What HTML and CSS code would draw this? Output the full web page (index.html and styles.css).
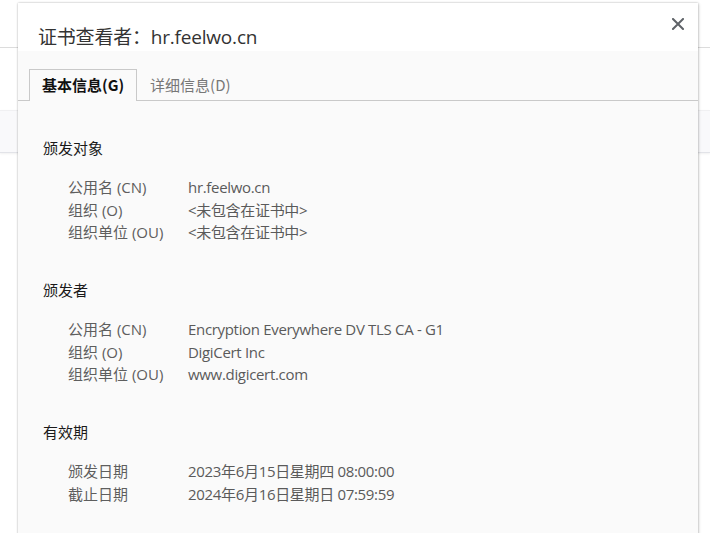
FILE: index.html
```html
<!DOCTYPE html>
<html lang="zh">
<head>
<meta charset="utf-8">
<title>证书查看者</title>
<link rel="stylesheet" href="styles.css">
</head>
<body>
<div class="page">
  <div class="bg-top"></div>
  <div class="bg-gap"></div>
  <div class="bg-band"></div>
</div>
<div class="dialog">
  <div class="dialog-head">
    <h1 class="title">证书查看者：hr.feelwo.cn</h1>
    <button class="close" aria-label="关闭">
      <svg width="12" height="12" viewBox="0 0 12 12"><path d="M1 1L11 11M11 1L1 11" stroke="#5f6368" stroke-width="2" stroke-linecap="square" fill="none"/></svg>
    </button>
  </div>
  <div class="dialog-body">
    <div class="tabs">
      <div class="tab active">基本信息(G)</div>
      <div class="tab">详细信息(D)</div>
    </div>
    <div class="content">
      <section class="section">
        <h2 class="sec-title">颁发对象</h2>
        <div class="rows">
          <div class="row"><span class="label">公用名 (CN)</span><span class="value">hr.feelwo.cn</span></div>
          <div class="row"><span class="label">组织 (O)</span><span class="value">&lt;未包含在证书中&gt;</span></div>
          <div class="row"><span class="label">组织单位 (OU)</span><span class="value">&lt;未包含在证书中&gt;</span></div>
        </div>
      </section>
      <section class="section">
        <h2 class="sec-title">颁发者</h2>
        <div class="rows">
          <div class="row"><span class="label">公用名 (CN)</span><span class="value">Encryption Everywhere DV TLS CA - G1</span></div>
          <div class="row"><span class="label">组织 (O)</span><span class="value">DigiCert Inc</span></div>
          <div class="row"><span class="label">组织单位 (OU)</span><span class="value">www.digicert.com</span></div>
        </div>
      </section>
      <section class="section">
        <h2 class="sec-title">有效期</h2>
        <div class="rows">
          <div class="row"><span class="label">颁发日期</span><span class="value">2023年6月15日星期四 08:00:00</span></div>
          <div class="row"><span class="label">截止日期</span><span class="value">2024年6月16日星期日 07:59:59</span></div>
        </div>
      </section>
    </div>
  </div>
</div>
</body>
</html>
```
FILE: styles.css
```css
html, body {
  margin: 0;
  padding: 0;
  background: #ffffff;
  overflow: hidden;
  height: 100%;
}
body {
  font-family: "Open Sans", "Noto Sans CJK SC", sans-serif;
  position: relative;
}
.page {
  display: flex;
  flex-direction: column;
}
.bg-top {
  height: 47px;
  border-bottom: 1px solid #dcdcdc;
}
.bg-gap {
  height: 62px;
}
.bg-band {
  height: 41px;
  background: #f9f9fb;
  border-top: 1px solid #f0f0f2;
  border-bottom: 1px solid #e2e3e8;
  box-shadow: 0 1px 2px rgba(0,0,0,0.06);
}
.dialog {
  position: absolute;
  left: 18px;
  top: 3px;
  width: 680px;
  bottom: -20px;
  background: #fafafa;
  box-shadow: 0 0 2px rgba(0,0,0,0.28), 1px 1px 3px rgba(0,0,0,0.12);
  display: flex;
  flex-direction: column;
}
.dialog-head {
  height: 48px;
  background: #ffffff;
  display: flex;
  align-items: flex-start;
  justify-content: space-between;
}
.title {
  margin: 20px 0 0 20px;
  font-family: "Open Sans", "Noto Sans CJK SC", sans-serif;
  font-weight: normal;
  font-size: 19px;
  line-height: 28px;
  color: #333333;
  letter-spacing: -0.2px;
}
.close {
  margin: 13px 12px 0 0;
  width: 16px;
  height: 16px;
  padding: 2px;
  border: 0;
  background: transparent;
  display: flex;
  align-items: center;
  justify-content: center;
}
.dialog-body {
  flex: 1;
}
.tabs {
  margin-top: 18px;
  padding-left: 11px;
  display: flex;
  border-bottom: 1px solid #c9c9c9;
  height: 31px;
}
.tab {
  font-family: "Noto Sans CJK SC", sans-serif;
  font-size: 15px;
  line-height: 30px;
  color: #777777;
  padding: 0 12px;
  border: 1px solid transparent;
  border-bottom: 0;
}
.tab.active {
  font-weight: bold;
  color: #111111;
  border-color: #c9c9c9;
  background: #fafafa;
  height: 31px;
  margin-bottom: -1px;
}
.content {
  padding: 36px 0 0 25px;
  display: flex;
  flex-direction: column;
  gap: 35.5px;
}
.sec-title {
  margin: 0;
  font-family: "Noto Sans CJK SC", sans-serif;
  font-weight: normal;
  font-size: 15px;
  line-height: 22.5px;
  color: #1a1a1a;
}
.rows {
  margin-top: 16.5px;
  padding-left: 25px;
}
.row {
  display: flex;
  font-size: 15px;
  line-height: 22.5px;
  color: #5e5e5e;
}
.label {
  width: 120px;
  flex: none;
}
.value {
  color: #5a5a5a;
  letter-spacing: -0.32px;
}
```
